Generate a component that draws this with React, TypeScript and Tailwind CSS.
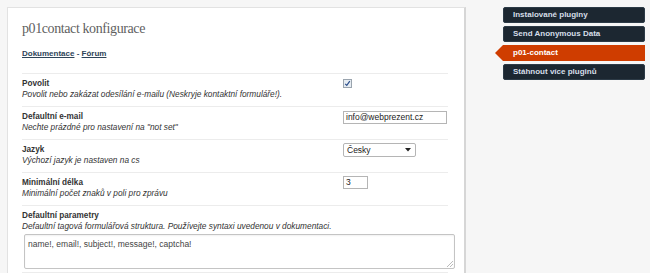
const rows = [
  {
    label: 'Povolit',
    desc: 'Povolit nebo zakázat odesílání e-mailu (Neskryje kontaktní formuláře!).',
    field: 'check',
  },
  {
    label: 'Defaultní e-mail',
    desc: 'Nechte prázdné pro nastavení na "not set"',
    field: 'email',
  },
  {
    label: 'Jazyk',
    desc: 'Výchozí jazyk je nastaven na cs',
    field: 'select',
  },
  {
    label: 'Minimální délka',
    desc: 'Minimální počet znaků v poli pro zprávu',
    field: 'number',
  },
]

const menu = ['Instalované pluginy', 'Send Anonymous Data', 'p01-contact', 'Stáhnout více pluginů']

function Field({ kind }: { kind: string }) {
  if (kind === 'check') {
    return (
      <div className="mt-[2px] flex h-[9px] w-[9px] items-center justify-center border border-[#9aa4ae] bg-[#e6ecf2]">
        <svg width="7" height="7" viewBox="0 0 7 7">
          <path d="M1.2 3.8 L2.8 5.4 L5.8 1.2" fill="none" stroke="#2b4e8c" strokeWidth="1.2" />
        </svg>
      </div>
    )
  }
  if (kind === 'email') {
    return (
      <div className="mt-[1px] flex h-[13px] w-[104px] items-center border border-[#b5b5b5] bg-white pl-[2px] text-[8.5px] text-[#222]">
        info@webprezent.cz
      </div>
    )
  }
  if (kind === 'select') {
    return (
      <div className="flex h-[14px] w-[73px] items-center justify-between rounded-[2px] border border-[#b5b5b5] bg-white pl-[3px] pr-[4px] text-[8.5px] text-[#222]">
        <span>Česky</span>
        <svg width="6" height="4" viewBox="0 0 6 4">
          <path d="M0 0 H6 L3 3.5 Z" fill="#222" />
        </svg>
      </div>
    )
  }
  return (
    <div className="flex h-[13px] w-[25px] items-center border border-[#b5b5b5] bg-white pl-[2px] text-[8.5px] text-[#222]">
      3
    </div>
  )
}

export default function App() {
  return (
    <div className="flex h-[273px] items-start overflow-hidden bg-[#f6f6f6] pl-[7px] pt-[7px] font-['Liberation_Sans',Arial,sans-serif]">
      {/* Main settings panel */}
      <div className="w-[459px] shrink-0 border border-r-2 border-[#e2e2e2] border-r-[#d6d6d6] bg-white pb-[20px] pl-[14px] pr-[16px] pt-[12px]">
        <h2 className="font-['Liberation_Serif',Georgia,serif] text-[14px] leading-[18px] tracking-[-0.4px] text-[#5f5f5f]">
          p01contact konfigurace
        </h2>
        <div className="mt-[11px] text-[8px] font-bold leading-[10px] text-[#2e4458]">
          <a className="underline">Dokumentace</a> - <a className="underline">Fórum</a>
        </div>

        <div className="mt-[14px]">
          {rows.map((r) => (
            <div key={r.label} className="flex h-[33px] border-t border-[#ececec]">
              <div className="w-[321px] shrink-0 pt-[5px] text-[#333]">
                <div className="text-[8.2px] font-bold leading-[10px]">{r.label}</div>
                <div className="whitespace-nowrap text-[8.3px] italic leading-[11px]">{r.desc}</div>
              </div>
              <div className="pt-[3px]">
                <Field kind={r.field} />
              </div>
            </div>
          ))}

          <div className="border-t border-[#ececec] pt-[5px] text-[#333]">
            <div className="text-[8.2px] font-bold leading-[10px]">Defaultní parametry</div>
            <div className="whitespace-nowrap text-[8.3px] italic leading-[11px]">
              Defaultní tagová formulářová struktura. Používejte syntaxi uvedenou v dokumentaci.
            </div>
            <div className="relative ml-[2px] mt-[2px] h-[35px] w-[431px] rounded-[2px] border border-[#c4c4c4] bg-white px-[3px] pt-[4px] text-[8.5px] leading-[10px] text-[#444] shadow-[inset_0_1px_2px_rgba(0,0,0,0.06)]">
              name!, email!, subject!, message!, captcha!
              <svg className="absolute bottom-[1px] right-[1px]" width="6" height="6" viewBox="0 0 6 6">
                <path d="M6 0 L0 6 M6 3 L3 6" stroke="#aaa" strokeWidth="0.8" />
              </svg>
            </div>
            <div className="mt-[3px] border-t border-[#ececec]" />
          </div>
        </div>
      </div>

      {/* Plugin sidebar */}
      <div className="ml-[37px] flex w-[142px] flex-col gap-[3px]">
        {menu.map((m) =>
          m === 'p01-contact' ? (
            <div
              key={m}
              className="-ml-[8px] flex h-[16px] items-center bg-[#cf3d00] pl-[18px] text-[8px] font-bold text-white [clip-path:polygon(8px_0,100%_0,100%_100%,8px_100%,0_50%)]"
            >
              {m}
            </div>
          ) : (
            <div
              key={m}
              className="flex h-[16px] items-center rounded-[2px] border border-[#2c3a46] bg-[#1c2731] pl-[9px] text-[8px] font-bold text-[#d6dee8]"
            >
              {m}
            </div>
          )
        )}
      </div>
    </div>
  )
}
